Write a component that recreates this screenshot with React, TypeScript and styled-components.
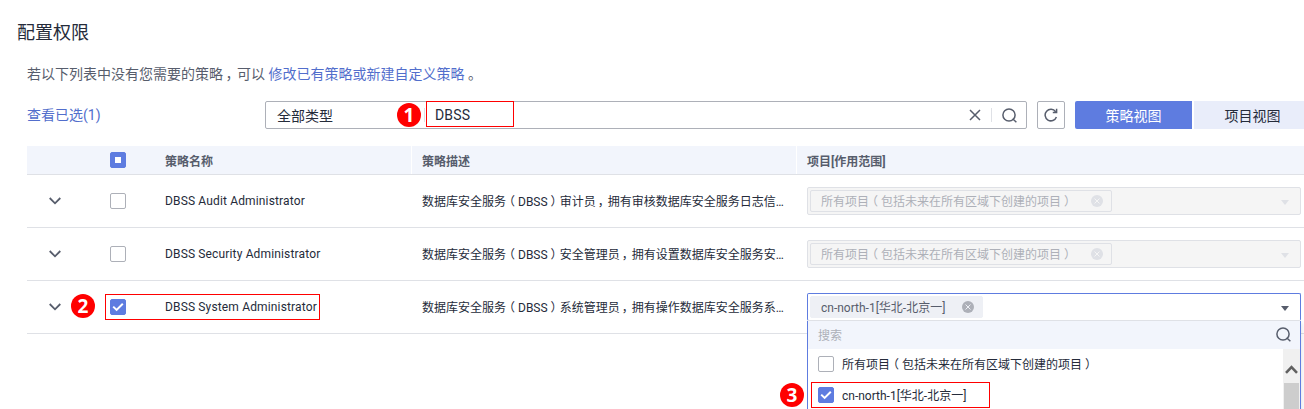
import React from "react";
import styled, { createGlobalStyle, css } from "styled-components";

const c = {
  text: "#252b3a",
  sub: "#575d6c",
  link: "#526ecc",
  blue: "#5e7ce0",
  line: "#dfe1e6",
  border: "#adb0b8",
  head: "#f2f5fc",
  mark: "#ff0000",
};

const Global = createGlobalStyle`
  * { box-sizing: border-box; }
  html, body { margin: 0; background: #fff; }
  body {
    height: 409px;
    overflow: hidden;
    font-family: Roboto, "Noto Sans CJK SC", sans-serif;
    font-size: 12px;
    color: ${c.text};
  }
`;

const Page = styled.main`
  position: relative;
  width: 1304px;
  height: 409px;
  overflow: hidden;
`;
const Title = styled.h1`
  margin: 0;
  padding: 21px 0 0 17px;
  font-size: 18px;
  line-height: 24px;
  font-weight: 400;
`;
const Intro = styled.p`
  margin: 19px 0 0 27px;
  font-size: 14px;
  line-height: 20px;
  color: ${c.sub};
  white-space: pre;
`;
const Link = styled.a`
  color: ${c.link};
`;
const Mid = styled.span<{ $comma?: boolean }>`
  display: inline-block;
  width: 1em;
  padding-right: ${(p) => (p.$comma ? 2 : 0)}px;
  text-align: center;
  font-family: "Noto Sans CJK SC", sans-serif;
  font-feature-settings: "halt";
  line-height: 1;
`;

const Toolbar = styled.div`
  display: flex;
  height: 28px;
  margin: 17px 0 0 27px;
`;
const Selected = styled.a`
  flex: none;
  width: 238px;
  font-size: 14px;
  line-height: 28px;
  color: ${c.link};
`;
const SearchBox = styled.div`
  display: flex;
  flex: none;
  align-items: center;
  width: 762px;
  border: 1px solid ${c.border};
  border-radius: 2px;
  font-size: 14px;
`;
const Category = styled.span`
  width: 158px;
  padding-left: 11px;
`;
const Query = styled.span`
  flex: 1;
  padding-left: 10px;
  letter-spacing: 0.15px;
`;
const Divider = styled.i`
  width: 1px;
  height: 14px;
  background: ${c.line};
`;
const ToolIcon = styled.span<{ $w: number }>`
  display: flex;
  justify-content: center;
  width: ${(p) => p.$w}px;
`;
const Refresh = styled.button`
  display: flex;
  flex: none;
  align-items: center;
  justify-content: center;
  width: 28px;
  height: 28px;
  margin: 0 10px;
  padding: 0;
  border: 1px solid ${c.border};
  border-radius: 2px;
  background: #fff;
`;
const ViewTab = styled.button<{ $active?: boolean }>`
  width: 117px;
  height: 28px;
  margin-right: 2px;
  padding: 1px 0 0;
  flex: none;
  border: 0;
  border-radius: ${(p) => (p.$active ? "2px 0 0 2px" : "0")};
  font: inherit;
  font-size: 14px;
  line-height: 26px;
  color: ${(p) => (p.$active ? "#fff" : c.text)};
  background: ${(p) => (p.$active ? c.blue : "#e9edfa")};
`;

const columns = css`
  display: grid;
  grid-template-columns: 72px 55px 258px 385px 507px;
`;
const Table = styled.section`
  margin: 17px 0 0 27px;
`;
const HeadRow = styled.div`
  ${columns}
  height: 29px;
  background: ${c.head};
  border-bottom: 1px solid ${c.line};
`;
const HeadCell = styled.div<{ $split?: boolean; $pad?: number }>`
  display: flex;
  align-items: center;
  padding-left: ${(p) => p.$pad ?? 11}px;
  font-weight: 700;
  color: ${c.sub};
  border-right: ${(p) => (p.$split ? "1px solid #fff" : "0")};
`;
const Row = styled.div`
  ${columns}
  height: 53px;
  border-bottom: 1px solid ${c.line};
`;
const Cell = styled.div<{ $pad?: number }>`
  display: flex;
  align-items: center;
  padding-left: ${(p) => p.$pad ?? 11}px;
  white-space: nowrap;
`;
const NameCell = styled(Cell)`
  letter-spacing: 0.15px;
`;
const TextLine = styled.span`
  padding-bottom: 1px;
`;

const Box = styled.span<{ $on?: boolean }>`
  display: flex;
  flex: none;
  align-items: center;
  justify-content: center;
  width: 16px;
  height: 16px;
  border: 1px solid ${(p) => (p.$on ? c.blue : c.border)};
  border-radius: 2px;
  background: ${(p) => (p.$on ? c.blue : "#fff")};
`;
const Partial = styled.i`
  width: 6px;
  height: 6px;
  background: #fff;
`;

const Select = styled.div<{ $open?: boolean }>`
  position: relative;
  display: flex;
  align-items: center;
  width: 494px;
  height: 28px;
  padding: 0 11px 0 2px;
  justify-content: space-between;
  border: 1px solid ${(p) => (p.$open ? c.blue : c.line)};
  border-bottom-color: ${c.line};
  border-radius: 2px;
  background: ${(p) => (p.$open ? "#fff" : "#f5f5f5")};
`;
const Tag = styled.span<{ $open?: boolean }>`
  display: flex;
  align-items: center;
  justify-content: space-between;
  width: ${(p) => (p.$open ? 173 : 302)}px;
  height: 22px;
  padding: 0 8px 0 10px;
  border: 1px solid ${(p) => (p.$open ? "#eef0f5" : c.line)};
  border-radius: 2px;
  color: ${(p) => (p.$open ? c.sub : c.border)};
  background: ${(p) => (p.$open ? "#eef0f5" : "transparent")};
`;
const Caret = styled.i<{ $open?: boolean }>`
  border: 4px solid transparent;
  border-bottom: 0;
  border-top: 5px solid ${(p) => (p.$open ? c.sub : c.line)};
  margin-top: 3px;
`;
const Menu = styled.div`
  position: absolute;
  z-index: 1;
  top: 27px;
  left: -1px;
  width: 494px;
  height: 100px;
  border: solid ${c.blue};
  border-width: 0 1px;
  background: #fff;
  box-shadow: 2px 2px 4px rgba(0, 0, 0, 0.08);
  clip-path: inset(0 -6px 0 0);
`;
const MenuSearch = styled.div`
  display: flex;
  align-items: center;
  justify-content: space-between;
  height: 28px;
  padding: 0 9px 1px 10px;
  background: ${c.head};
  color: ${c.border};
`;
const MenuBody = styled.div`
  display: flex;
  height: 72px;
`;
const Options = styled.div`
  flex: 1;
  margin-top: -1px;
`;
const Option = styled.div`
  display: flex;
  align-items: center;
  gap: 8px;
  height: 31px;
  padding-left: 10px;
`;
const Scroll = styled.div`
  display: flex;
  flex-direction: column;
  align-items: center;
  width: 17px;
  padding-top: 16px;
  background: #f0f0f0;
`;
const Thumb = styled.i`
  flex: 1;
  width: 15px;
  margin-top: 9px;
  background: #cdcdcd;
`;

const Frame = styled.div<{ $x: number; $y: number; $w: number }>`
  position: absolute;
  z-index: 2;
  left: ${(p) => p.$x}px;
  top: ${(p) => p.$y}px;
  width: ${(p) => p.$w}px;
  height: 26px;
  border: 1px solid ${c.mark};
`;
const Badge = styled.b<{ $x: number; $y: number }>`
  position: absolute;
  z-index: 2;
  left: ${(p) => p.$x}px;
  top: ${(p) => p.$y}px;
  width: 24px;
  height: 24px;
  border-radius: 50%;
  background: ${c.mark};
  box-shadow: 0 0 0 1px #fff;
  color: #fff;
  font: 700 19px/24px "Open Sans", sans-serif;
  text-align: center;
`;

const Chevron = () => (
  <svg width="12" height="8" viewBox="0 0 12 8" fill="none" stroke={c.sub} strokeWidth="1.8">
    <path d="M.7 1 6 6.3 11.3 1" />
  </svg>
);
const Check = () => (
  <svg width="12" height="10" viewBox="0 0 12 10" fill="none" stroke="#fff" strokeWidth="2">
    <path d="M1.2 4.6 4.6 7.9 10.8 1.7" />
  </svg>
);
const Magnifier = () => (
  <svg width="15" height="15" viewBox="0 0 15 15" fill="none" stroke={c.sub} strokeWidth="1.5">
    <circle cx="7" cy="7" r="6.1" />
    <path d="m10.6 10.8 3.8 3.5" />
  </svg>
);
const Cross = () => (
  <svg width="12" height="12" viewBox="0 0 12 12" fill="none" stroke={c.sub} strokeWidth="1.5">
    <path d="m1 1 10 10M11 1 1 11" />
  </svg>
);
const Reload = () => (
  <svg width="14" height="14" viewBox="0 0 14 14" fill="none" stroke={c.sub} strokeWidth="1.5">
    <path d="M12.4 9A5.8 5.8 0 1 1 11.6 3.6M12.6.8v3.8H8.8" />
  </svg>
);
const Remove = ({ color, cross }: { color: string; cross: string }) => (
  <svg width="12" height="12" viewBox="0 0 12 12">
    <circle cx="6" cy="6" r="6" fill={color} />
    <path d="m3.5 3.5 5 5m0-5-5 5" stroke={cross} />
  </svg>
);
const ScrollUp = () => (
  <svg width="13" height="9" viewBox="0 0 13 9" fill="none" stroke="#606060" strokeWidth="2.6">
    <path d="m1 7.8 5.5-5.6L12 7.8" />
  </svg>
);

const AllProjects = () => (
  <TextLine>
    所有项目<Mid>（</Mid>包括未来在所有区域下创建的项目<Mid>）</Mid>
  </TextLine>
);

const policies = [
  { name: "DBSS Audit Administrator", tail: ["审计员", "拥有审核数据库安全服务日志信…"] },
  { name: "DBSS Security Administrator", tail: ["安全管理员", "拥有设置数据库安全服务安…"] },
  { name: "DBSS System Administrator", tail: ["系统管理员", "拥有操作数据库安全服务系…"], on: true },
];

const Scope = ({ open }: { open?: boolean }) => (
  <Select $open={open}>
    <Tag $open={open}>
      {open ? <TextLine>cn-north-1[华北-北京一]</TextLine> : <AllProjects />}
      <Remove color={open ? c.border : c.line} cross={open ? "#eef0f5" : "#f5f5f5"} />
    </Tag>
    <Caret $open={open} />
    {open && (
      <Menu>
        <MenuSearch>
          搜索
          <Magnifier />
        </MenuSearch>
        <MenuBody>
          <Options>
            <Option>
              <Box />
              <AllProjects />
            </Option>
            <Option>
              <Box $on>
                <Check />
              </Box>
              <TextLine>cn-north-1[华北-北京一]</TextLine>
            </Option>
          </Options>
          <Scroll>
            <ScrollUp />
            <Thumb />
          </Scroll>
        </MenuBody>
      </Menu>
    )}
  </Select>
);

export default function App() {
  return (
    <Page>
      <Global />
      <Title>配置权限</Title>
      <Intro>
        若以下列表中没有您需要的策略<Mid $comma>，</Mid>可以 <Link>修改已有策略或新建自定义策略</Link> 。
      </Intro>
      <Toolbar>
        <Selected>查看已选(1)</Selected>
        <SearchBox>
          <Category>全部类型</Category>
          <Divider />
          <Query>DBSS</Query>
          <ToolIcon $w={32}>
            <Cross />
          </ToolIcon>
          <Divider />
          <ToolIcon $w={34}>
            <Magnifier />
          </ToolIcon>
        </SearchBox>
        <Refresh>
          <Reload />
        </Refresh>
        <ViewTab $active>策略视图</ViewTab>
        <ViewTab>项目视图</ViewTab>
      </Toolbar>
      <Table>
        <HeadRow>
          <HeadCell />
          <HeadCell>
            <Box $on>
              <Partial />
            </Box>
          </HeadCell>
          <HeadCell $split>策略名称</HeadCell>
          <HeadCell $split $pad={10}>
            策略描述
          </HeadCell>
          <HeadCell $pad={10}>项目[作用范围]</HeadCell>
        </HeadRow>
        {policies.map((p) => (
          <Row key={p.name}>
            <Cell $pad={22}>
              <Chevron />
            </Cell>
            <Cell>
              <Box $on={p.on}>{p.on && <Check />}</Box>
            </Cell>
            <NameCell>{p.name}</NameCell>
            <Cell $pad={10}>
              <TextLine>
                数据库安全服务<Mid>（</Mid>DBSS<Mid>）</Mid>
                {p.tail[0]}
                <Mid $comma>，</Mid>
                {p.tail[1]}
              </TextLine>
            </Cell>
            <Cell $pad={10}>
              <Scope open={p.on} />
            </Cell>
          </Row>
        ))}
      </Table>
      <Frame $x={426} $y={101} $w={88} />
      <Frame $x={105} $y={294} $w={215} />
      <Frame $x={811} $y={382} $w={179} />
      <Badge $x={397} $y={103}>1</Badge>
      <Badge $x={71} $y={294}>2</Badge>
      <Badge $x={780} $y={383}>3</Badge>
    </Page>
  );
}
